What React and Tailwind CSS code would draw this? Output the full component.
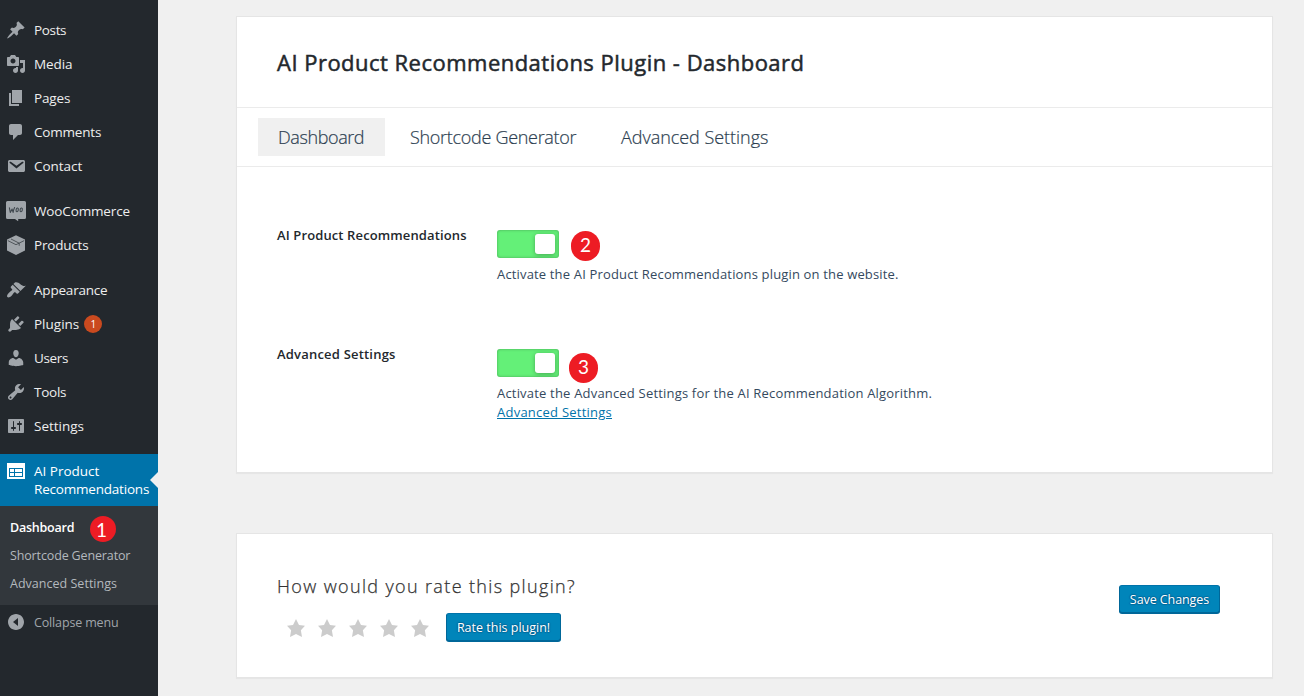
import React from "react";

const ICONS = {
  post: "M10.44 3.02l1.82-1.82 6.36 6.35-1.83 1.82c-1.05-.68-2.48-.57-3.41.36l-.75.75c-.92.93-1.04 2.35-.35 3.41l-1.83 1.82-2.41-2.41-2.8 2.79c-.42.42-3.38 2.71-3.8 2.29s1.86-3.39 2.28-3.81l2.79-2.79L4.1 9.36l1.83-1.82c1.05.69 2.48.57 3.4-.36l.75-.75c.93-.92 1.05-2.35.36-3.41z",
  media: "M13 11V4c0-.55-.45-1-1-1h-1.67L9 1H5L3.67 3H2c-.55 0-1 .45-1 1v7c0 .55.45 1 1 1h10c.55 0 1-.45 1-1zM7 4.5c1.38 0 2.5 1.12 2.5 2.5S8.38 9.5 7 9.5 4.5 8.38 4.5 7 5.62 4.5 7 4.5zM14 6h5v10.5c0 1.38-1.12 2.5-2.5 2.5S14 17.88 14 16.5s1.12-2.5 2.5-2.5c.17 0 .34.02.5.05V9h-3V6zm-4 8.05V13h2v3.5c0 1.38-1.12 2.5-2.5 2.5S7 17.88 7 16.5 8.12 14 9.5 14c.17 0 .34.02.5.05z",
  page: "M6 15V2h10v13H6zm-1 1h8v2H3V5h2v11z",
  comments: "M5 2h9c1.1 0 2 .9 2 2v7c0 1.1-.9 2-2 2h-2l-5 5v-5H5c-1.1 0-2-.9-2-2V4c0-1.1.9-2 2-2z",
  email: "M3.87 4h13.25C18.37 4 19 4.59 19 5.79v8.42c0 1.19-.63 1.79-1.88 1.79H3.87c-1.25 0-1.88-.6-1.88-1.79V5.79c0-1.2.63-1.79 1.88-1.79zm6.62 8.6l6.74-5.53c.24-.2.43-.66.13-1.07-.29-.41-.82-.42-1.17-.17l-5.7 3.86L4.8 5.83c-.35-.25-.88-.24-1.17.17-.3.41-.11.87.13 1.07z",
  appearance: "M14.48 11.06L7.41 3.99l1.5-1.5c.5-.56 2.3-.47 3.51.32 1.21.8 1.43 1.28 2.91 2.1 1.18.64 2.45 1.26 4.45.85zm-.71.71L6.7 4.7 4.93 6.47c-.39.39-.39 1.02 0 1.41l1.06 1.06c.39.39.39 1.03 0 1.42-.6.6-1.43 1.11-2.21 1.69-.35.26-.7.53-1.01.84C1.43 14.23.4 16.08 1.4 17.07c.99 1 2.84-.03 4.18-1.36.31-.31.58-.66.85-1.02.57-.78 1.08-1.61 1.69-2.21.39-.39 1.02-.39 1.41 0l1.06 1.06c.39.39 1.02.39 1.41 0z",
  plugins: "M13.11 4.36L9.87 7.6 8 5.73l3.24-3.24c.35-.34 1.05-.2 1.56.32.52.51.66 1.21.31 1.55zm-8 1.77l.91-1.12 9.01 9.01-1.19.84c-.71.71-2.63 1.16-3.82 1.16H6.14L4.9 17.26c-.59.59-1.54.59-2.12 0-.59-.58-.59-1.53 0-2.12l1.24-1.24v-3.88c0-1.13.4-3.19 1.09-3.89zm7.26 3.97l3.24-3.24c.34-.35 1.04-.21 1.55.31.52.51.66 1.21.31 1.55l-3.24 3.25z",
  users: "M10 9.25c-2.27 0-2.73-3.44-2.73-3.44C7 4.02 7.82 2 9.97 2c2.16 0 2.98 2.02 2.71 3.81 0 0-.41 3.44-2.68 3.44zm0 2.57L12.72 10c2.39 0 4.52 2.33 4.52 4.53v2.49s-3.65 1.13-7.24 1.13c-3.65 0-7.24-1.13-7.24-1.13v-2.49c0-2.25 1.94-4.48 4.47-4.48z",
  tools: "M16.68 9.77c-1.34 1.34-3.3 1.67-4.95.99l-5.41 6.52c-.99.99-2.59.99-3.58 0s-.99-2.59 0-3.57l6.52-5.42c-.68-1.65-.35-3.61.99-4.95 1.28-1.28 3.12-1.62 4.72-1.06l-2.89 2.89 2.82 2.82 2.86-2.87c.53 1.58.18 3.39-1.08 4.65zM3.81 16.21c.4.39 1.04.39 1.43 0 .4-.4.4-1.04 0-1.43-.39-.4-1.03-.4-1.43 0-.39.39-.39 1.03 0 1.43z",
  settings: "M18 16V4c0-.55-.45-1-1-1H3c-.55 0-1 .45-1 1v12c0 .55.45 1 1 1h14c.55 0 1-.45 1-1zM8 11h1c.55 0 1 .45 1 1s-.45 1-1 1H8v1.5c0 .28-.22.5-.5.5s-.5-.22-.5-.5V13H6c-.55 0-1-.45-1-1s.45-1 1-1h1V5.5c0-.28.22-.5.5-.5s.5.22.5.5V11zm5-2h-1c-.55 0-1-.45-1-1s.45-1 1-1h1V5.5c0-.28.22-.5.5-.5s.5.22.5.5V7h1c.55 0 1 .45 1 1s-.45 1-1 1h-1v5.5c0 .28-.22.5-.5.5s-.5-.22-.5-.5V9z",
  list: "M1 2h18v16H1V2zm2 5v9h14V7H3zm1 1h4v3H4V8zm5 0h7v3H9V8zm-5 4h4v3H4v-3zm5 0h7v3H9v-3z",
  collapse: "M10 2c4.42 0 8 3.58 8 8s-3.58 8-8 8-8-3.58-8-8 3.58-8 8-8zm2 12V6l-5 4z",
  star: "M10 1l3 6 6 .75-4.12 4.62L16 19l-6-3-6 3 1.13-6.63L1 7.75 7 7z",
};

function Icon({ name, className = "size-5" }) {
  if (name === "woo")
    return (
      <svg viewBox="0 0 20 20" className={className} fill="currentColor">
        <path d="M1.5 0h17A1.500 1.500 0 0 1 20 1.500v15a1.500 1.500 0 0 1-1.500 1.500h-6.300v2.300L9 18H1.500A1.500 1.500 0 0 1 0 16.500v-15A1.500 1.500 0 0 1 1.500 0z" />
        <g fill="none" stroke="#3f474e" strokeWidth="1.100" strokeLinecap="round" strokeLinejoin="round">
          <path d="M3.400 6.800l.9 4.600 1.800-3.300 1 3.300c.3-1.800.8-3.400 1.500-4.800" />
          <ellipse cx="11.200" cy="8.900" rx="1.100" ry="1.900" transform="rotate(12 11.200 8.900)" />
          <ellipse cx="15.200" cy="8.900" rx="1.100" ry="1.900" transform="rotate(12 15.200 8.900)" />
        </g>
      </svg>
    );
  if (name === "products")
    return (
      <svg viewBox="0 0 20 20" className={className} fill="currentColor">
        <path d="M10 .2l9 4.400v10.800l-9 4.600-9-4.600V4.600z" />
        <path d="M1.800 5.600L10 9.700l8.200-4.100M5 4l8.200 4.200v2.600" fill="none" stroke="#3a4045" strokeWidth=".8" />
      </svg>
    );
  return (
    <svg viewBox="0 0 20 20" className={className} fill="currentColor" fillRule="evenodd">
      <path d={ICONS[name]} />
    </svg>
  );
}

const GROUPS = [
  [
    ["post", "Posts", "tracking-[-0.35px]"],
    ["media", "Media", "tracking-[-0.1px]"],
    ["page", "Pages", "tracking-[-0.15px]"],
    ["comments", "Comments", "tracking-[-0.2px]"],
    ["email", "Contact", "tracking-[-0.05px]"],
  ],
  [
    ["woo", "WooCommerce", "tracking-[-0.14px]"],
    ["products", "Products", "tracking-[-0.2px]"],
  ],
  [
    ["appearance", "Appearance", "tracking-[-0.2px]"],
    ["plugins", "Plugins", "tracking-[0px]", 1],
    ["users", "Users", "tracking-[-0.35px]"],
    ["tools", "Tools", "tracking-[-0.25px]"],
    ["settings", "Settings", "tracking-[0px]"],
  ],
];

function MenuItem({ icon, label, tracking, count }) {
  return (
    <a className="flex h-[34px] items-center pl-1.5 text-[13.5px] text-[#eee]">
      <Icon name={icon} className="size-5 shrink-0 text-[#a0a5aa]" />
      <span className={"ml-2 " + tracking}>{label}</span>
      {count && (
        <span className="ml-[5px] flex size-[18px] items-center justify-center rounded-full bg-[#ca4a1f] pt-px text-[10px] text-white">
          {count}
        </span>
      )}
    </a>
  );
}

function Marker({ n, className }) {
  return (
    <span className={"absolute flex items-center justify-center rounded-full bg-[#ed1c24] font-['Lato',sans-serif] text-[19px] leading-none text-white " + className}>
      {n}
    </span>
  );
}

function Sidebar() {
  return (
    <aside className="flex w-[158px] shrink-0 flex-col bg-[#23282d] pt-[13px]">
      {GROUPS.map((g, i) => (
        <nav key={i} className="mb-[11px] flex flex-col">
          {g.map(([icon, label, tracking, count]) => (
            <MenuItem key={label} icon={icon} label={label} tracking={tracking} count={count} />
          ))}
        </nav>
      ))}
      <a className="relative flex h-[52px] bg-[#0073aa] pl-1.5 pt-[7px] text-[13.5px] leading-[18px] text-white">
        <Icon name="list" className="size-5 shrink-0" />
        <span className="ml-2 pt-px">
          AI Product
          <br />
          <span className="tracking-[-0.2px]">Recommendations</span>
        </span>
        <span className="absolute right-0 top-[18px] border-y-8 border-r-8 border-y-transparent border-r-[#f0f0f0]" />
      </a>
      <div className="relative flex h-[99px] flex-col bg-[#32373c] pl-2.5 pt-2 text-[12.5px] leading-7 text-[#b4b9be]">
        <a className="font-semibold tracking-[-0.22px] text-white">Dashboard</a>
        <a className="tracking-[-0.14px]">Shortcode Generator</a>
        <a className="tracking-[0.02px]">Advanced Settings</a>
        <Marker n="1" className="left-[90px] top-[10px] size-[26px] pr-[3px]" />
      </div>
      <a className="flex h-[34px] items-center pl-1.5 text-[12.5px] text-[#a0a5aa]">
        <Icon name="collapse" className="size-5" />
        <span className="ml-2 pt-0.5 tracking-[-0.15px]">Collapse menu</span>
      </a>
    </aside>
  );
}

function Toggle() {
  return (
    <div className="flex h-7 w-[62px] items-center justify-end rounded-[3px] bg-[#64f078] pr-1 shadow-[inset_0_0_3px_rgba(0,0,0,0.3)]">
      <span className="size-5 rounded-[3px] bg-white shadow-[0_1px_4px_rgba(0,0,0,0.3)]" />
    </div>
  );
}

function Button({ children, className }) {
  return (
    <button
      className={
        "h-7 rounded-[3px] border border-[#006799] border-t-[#0073aa] bg-[#0085ba] pt-px text-center text-[12.5px] leading-[26px] whitespace-nowrap text-white shadow-[0_1px_0_#006799] [text-shadow:0_-1px_1px_#006799,1px_0_1px_#006799,0_1px_1px_#006799,-1px_0_1px_#006799] " +
        className
      }
    >
      {children}
    </button>
  );
}

export default function App() {
  return (
    <div className="flex h-[696px] w-[1304px] overflow-hidden bg-[#f0f0f0] font-['Open_Sans','Noto_Sans',sans-serif]">
      <Sidebar />
      <main className="flex flex-1 flex-col pl-[78px] pr-[31px] pt-4">
        <section className="flex h-[457px] flex-col border border-[#e5e5e5] bg-white shadow-[0_1px_1px_rgba(0,0,0,0.04)]">
          <header className="flex h-[91px] items-center border-b border-[#ebebeb] pl-10">
            <h1 className="text-[22px] font-normal tracking-[0.48px] whitespace-nowrap text-[#23282d] [-webkit-text-stroke:0.5px_#23282d]">
              AI Product Recommendations Plugin - Dashboard
            </h1>
          </header>
          <nav className="flex h-[59px] items-center gap-1 border-b border-[#ebebeb] pl-[21px] text-[18px] font-light whitespace-nowrap text-[#2c3e50] [-webkit-text-stroke:0.2px_#2c3e50]">
            <a className="flex h-[38px] w-[127px] items-center bg-[#f0f0f0] pl-5 tracking-[-0.4px]">Dashboard</a>
            <a className="flex h-[38px] w-[207px] items-center pl-[21px] tracking-[-0.3px]">Shortcode Generator</a>
            <a className="flex h-[38px] items-center pl-[21px] tracking-[-0.04px]">Advanced Settings</a>
          </nav>
          <div className="relative flex pl-10 pt-[63px]">
            <h2 className="mt-[-3px] w-[220px] pt-[3px] text-[13px] leading-[11px] font-semibold tracking-[0.12px] text-[#23282d]">
              AI Product Recommendations
            </h2>
            <div className="flex flex-col text-[13px] text-[#34495e]">
              <Toggle />
              <p className="mt-[7px] leading-[19px] tracking-[0.16px]">
                Activate the AI Product Recommendations plugin on the website.
              </p>
            </div>
            <Marker n="2" className="left-[334px] top-[64px] h-[30px] w-[29px] pb-[3px]" />
          </div>
          <div className="relative flex pl-10 pt-[65px]">
            <h2 className="w-[220px] text-[13px] leading-[11px] font-semibold tracking-[0.2px] text-[#23282d]">
              Advanced Settings
            </h2>
            <div className="flex flex-col text-[13px] leading-[19px] text-[#34495e]">
              <Toggle />
              <p className="mt-[7px] tracking-[0.19px]">
                Activate the Advanced Settings for the AI Recommendation Algorithm.
              </p>
              <a className="self-start tracking-[0.24px] text-[#0073aa] underline">Advanced Settings</a>
            </div>
            <Marker n="3" className="left-[332px] top-[69px] h-[30px] w-[29px] pb-[3px]" />
          </div>
        </section>
        <section className="mt-[60px] flex h-[145px] justify-between border border-[#e5e5e5] bg-white pl-10 pr-[52px] shadow-[0_1px_1px_rgba(0,0,0,0.04)]">
          <div className="flex flex-col pt-[39px]">
            <p className="text-[18px] leading-[26px] font-light tracking-[1.36px] whitespace-nowrap text-[#333] [-webkit-text-stroke:0.25px_#333]">
              How would you rate this plugin?
            </p>
            <div className="mt-[14px] flex items-center">
              <div className="flex gap-[11px] pl-[9px] pt-px text-[#ccc]">
                {[1, 2, 3, 4, 5].map((n) => (
                  <Icon key={n} name="star" />
                ))}
              </div>
              <Button className="ml-4 w-[115px]">Rate this plugin!</Button>
            </div>
          </div>
          <Button className="mt-[51px] w-[101px] tracking-[-0.08px]">Save Changes</Button>
        </section>
      </main>
    </div>
  );
}
